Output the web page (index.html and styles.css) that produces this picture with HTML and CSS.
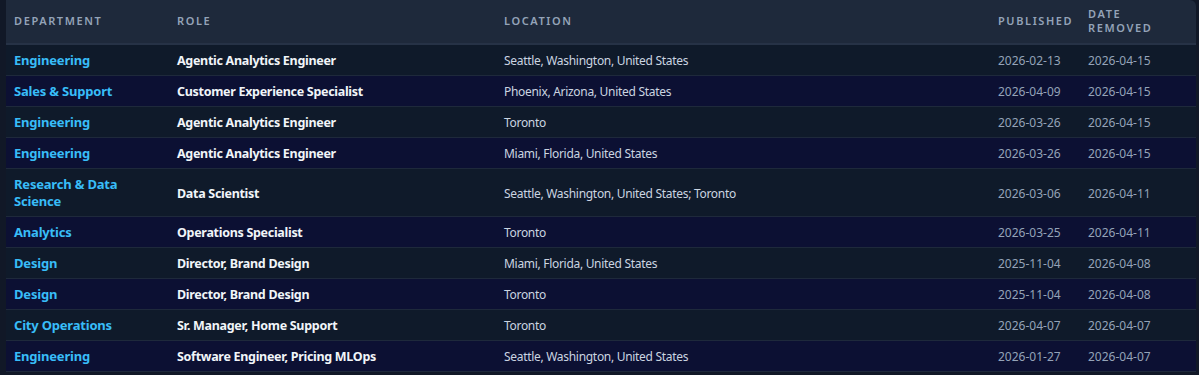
FILE: index.html
```html
<!DOCTYPE html>
<html lang="en">
<head>
<meta charset="utf-8">
<title>Removed postings</title>
<link rel="stylesheet" href="styles.css">
</head>
<body>
<div class="wrap">
<table class="jobs">
<colgroup>
<col class="c-dept"><col class="c-role"><col class="c-loc"><col class="c-pub"><col class="c-rem">
</colgroup>
<thead>
<tr><th>Department</th><th>Role</th><th>Location</th><th>Published</th><th>Date Removed</th></tr>
</thead>
<tbody>
<tr><td class="dept">Engineering</td><td class="role">Agentic Analytics Engineer</td><td class="loc">Seattle, Washington, United States</td><td class="date">2026-02-13</td><td class="date">2026-04-15</td></tr>
<tr><td class="dept">Sales &amp; Support</td><td class="role">Customer Experience Specialist</td><td class="loc">Phoenix, Arizona, United States</td><td class="date">2026-04-09</td><td class="date">2026-04-15</td></tr>
<tr><td class="dept">Engineering</td><td class="role">Agentic Analytics Engineer</td><td class="loc">Toronto</td><td class="date">2026-03-26</td><td class="date">2026-04-15</td></tr>
<tr><td class="dept">Engineering</td><td class="role">Agentic Analytics Engineer</td><td class="loc">Miami, Florida, United States</td><td class="date">2026-03-26</td><td class="date">2026-04-15</td></tr>
<tr><td class="dept">Research &amp; Data Science</td><td class="role">Data Scientist</td><td class="loc">Seattle, Washington, United States; Toronto</td><td class="date">2026-03-06</td><td class="date">2026-04-11</td></tr>
<tr><td class="dept">Analytics</td><td class="role">Operations Specialist</td><td class="loc">Toronto</td><td class="date">2026-03-25</td><td class="date">2026-04-11</td></tr>
<tr><td class="dept">Design</td><td class="role">Director, Brand Design</td><td class="loc">Miami, Florida, United States</td><td class="date">2025-11-04</td><td class="date">2026-04-08</td></tr>
<tr><td class="dept">Design</td><td class="role">Director, Brand Design</td><td class="loc">Toronto</td><td class="date">2025-11-04</td><td class="date">2026-04-08</td></tr>
<tr><td class="dept">City Operations</td><td class="role">Sr. Manager, Home Support</td><td class="loc">Toronto</td><td class="date">2026-04-07</td><td class="date">2026-04-07</td></tr>
<tr><td class="dept">Engineering</td><td class="role">Software Engineer, Pricing MLOps</td><td class="loc">Seattle, Washington, United States</td><td class="date">2026-01-27</td><td class="date">2026-04-07</td></tr>
</tbody>
</table>
</div>
</body>
</html>
```

FILE: styles.css
```css
html, body {
  margin: 0;
  background: #111827;
  font-family: "Noto Sans", "Open Sans", sans-serif;
}
.wrap {
  margin: 0 3px 0 6px;
  border-radius: 0 6px 0 0;
  overflow: hidden;
  background: #0f1a2a;
}
.jobs {
  width: 100%;
  border-collapse: collapse;
  table-layout: fixed;
}
.c-dept { width: 163px; }
.c-role { width: 327px; }
.c-loc { width: 494px; }
.c-pub { width: 90px; }
.c-rem { width: 116px; }
.jobs th {
  background: #1e293b;
  color: #94a3b8;
  font-size: 11px;
  font-weight: 600;
  letter-spacing: 1.6px;
  text-transform: uppercase;
  text-align: left;
  line-height: 14px;
  padding: 7px 8px 8px;
  border-bottom: 2px solid #263246;
  vertical-align: middle;
}
.jobs td {
  padding: 7px 8px 6px;
  line-height: 17px;
  border-bottom: 1px solid #1e293b;
  vertical-align: middle;
}
.jobs tbody tr:nth-child(odd) { background: #0f1a2a; }
.jobs tbody tr:nth-child(even) { background: #0c1033; }
.dept {
  color: #38bdf8;
  font-weight: 700;
  font-size: 13px;
  letter-spacing: -0.2px;
}
.role {
  color: #f1f5f9;
  font-weight: 700;
  font-size: 12.5px;
  letter-spacing: -0.3px;
}
.loc {
  color: #cbd5e1;
  font-size: 12px;
  letter-spacing: -0.3px;
}
.date {
  color: #94a3b8;
  font-size: 12px;
}
```
